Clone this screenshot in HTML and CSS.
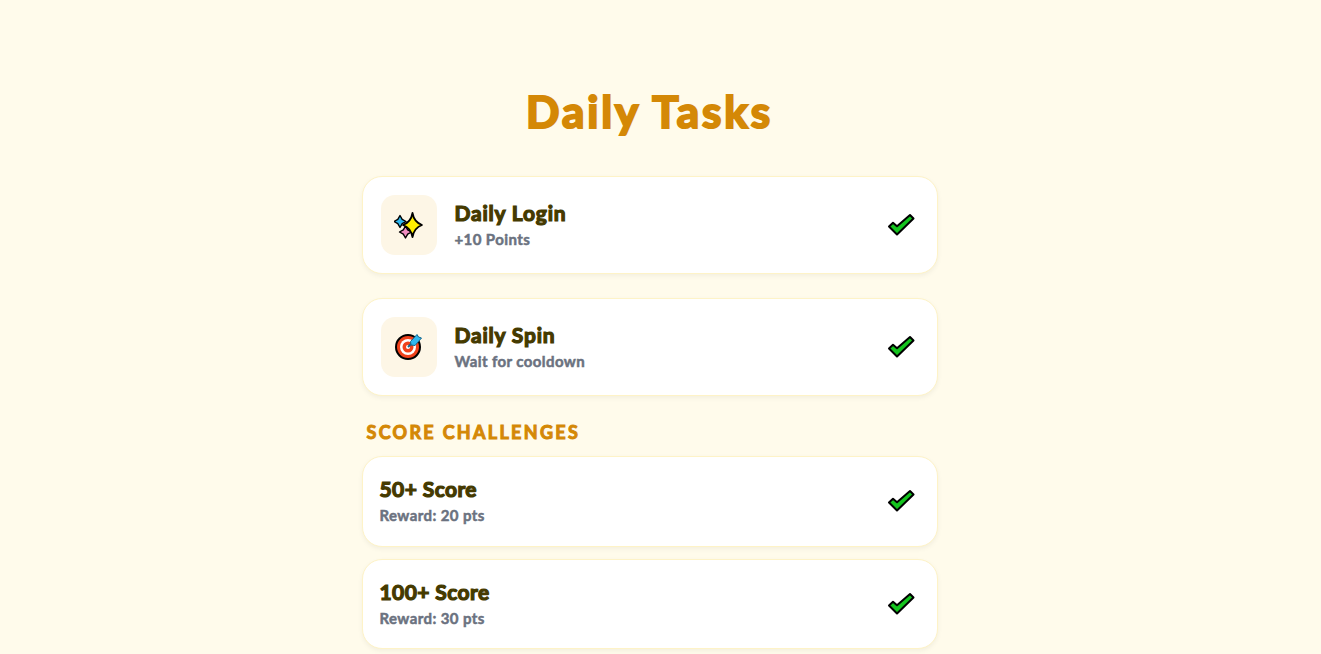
FILE: index.html
```html
<!DOCTYPE html>
<html lang="en">
<head>
    <meta charset="UTF-8">
    <meta name="viewport" content="width=device-width, initial-scale=1.0">
    <title>Daily Tasks</title>
    <link rel="stylesheet" href="styles.css">
</head>
<body>
    <main class="page">
        <h1 class="page-title">Daily Tasks</h1>

        <div class="task-card daily">
            <div class="task-icon">
                <svg width="30" height="30" viewBox="0 0 30 30">
                    <path d="M6 5.500L8.200 9.300 12 11.500 8.200 13.700 6 17.500 3.800 13.700 0 11.500 3.800 9.300z" fill="#2fb8f0" stroke="#000" stroke-width="1.400" stroke-linejoin="round"/>
                    <path d="M11.500 16L13.700 19.800 17.500 22 13.700 24.200 11.500 28 9.300 24.200 5.500 22 9.300 19.800z" fill="#f08cc0" stroke="#000" stroke-width="1.400" stroke-linejoin="round"/>
                    <path d="M18.500 3Q20 12 28 15 20 18 18.500 27 17 18 9 15 17 12 18.500 3z" fill="#ffee00" stroke="#000" stroke-width="1.800" stroke-linejoin="round"/>
                </svg>
            </div>
            <div class="task-text">
                <div class="task-name">Daily Login</div>
                <div class="task-sub">+10 Points</div>
            </div>
            <svg class="check" width="28" height="24" viewBox="0 0 28 24"><path d="M2 13.500l4-3.800 4 3.500L23 2l3.500 3.500L10 21.500z" fill="#14c41e" stroke="#000" stroke-width="2" stroke-linejoin="round"/></svg>
        </div>

        <div class="task-card daily">
            <div class="task-icon">
                <svg width="30" height="30" viewBox="0 0 30 30">
                    <circle cx="14" cy="15" r="12" fill="#f0421c" stroke="#000" stroke-width="2"/>
                    <circle cx="14" cy="15" r="8" fill="#fff"/>
                    <circle cx="14" cy="15" r="5.500" fill="#f0421c"/>
                    <circle cx="14" cy="15" r="2" fill="#fff"/>
                    <path d="M14 15L20 9" stroke="#14658c" stroke-width="2"/>
                    <path d="M16.500 9.500l6.500-7 1.500 2.500 3 1-6.500 7.500-4-.5z" fill="#2fb8f0" stroke="#14658c" stroke-width="1" stroke-linejoin="round"/>
                </svg>
            </div>
            <div class="task-text">
                <div class="task-name">Daily Spin</div>
                <div class="task-sub">Wait for cooldown</div>
            </div>
            <svg class="check" width="28" height="24" viewBox="0 0 28 24"><path d="M2 13.500l4-3.800 4 3.500L23 2l3.500 3.500L10 21.500z" fill="#14c41e" stroke="#000" stroke-width="2" stroke-linejoin="round"/></svg>
        </div>

        <h2 class="section-title">SCORE CHALLENGES</h2>

        <div class="task-card score">
            <div class="task-text">
                <div class="task-name">50+ Score</div>
                <div class="task-sub">Reward: 20 pts</div>
            </div>
            <svg class="check" width="28" height="24" viewBox="0 0 28 24"><path d="M2 13.500l4-3.800 4 3.500L23 2l3.500 3.500L10 21.500z" fill="#14c41e" stroke="#000" stroke-width="2" stroke-linejoin="round"/></svg>
        </div>

        <div class="task-card score">
            <div class="task-text">
                <div class="task-name">100+ Score</div>
                <div class="task-sub">Reward: 30 pts</div>
            </div>
            <svg class="check" width="28" height="24" viewBox="0 0 28 24"><path d="M2 13.500l4-3.800 4 3.500L23 2l3.500 3.500L10 21.500z" fill="#14c41e" stroke="#000" stroke-width="2" stroke-linejoin="round"/></svg>
        </div>
    </main>
</body>
</html>
```

FILE: styles.css
```css
body {
    margin: 0;
    padding-right: 22px;
    background-color: #fffbeb;
    font-family: "Lato", "Open Sans", sans-serif;
    overflow: hidden;
}
.page {
    width: 576px;
    margin: 0 auto;
    padding-top: 84px;
}
.page-title {
    margin: 0 0 37px;
    height: 55px;
    line-height: 55px;
    text-align: center;
    font-size: 44px;
    font-weight: 700;
    letter-spacing: 2.900px;
    color: #d48806;
    -webkit-text-stroke: 2.200px #d48806;
}
.task-card {
    display: flex;
    align-items: center;
    box-sizing: border-box;
    background: white;
    border: 1px solid #fef3c7;
    border-radius: 20px;
    box-shadow: 0 2px 5px rgba(0, 0, 0, 0.05);
}
.daily {
    height: 98px;
    padding: 0 18px;
    margin-bottom: 24px;
    gap: 18px;
}
.score {
    height: 90.500px;
    padding: 0 18px 0 17px;
    margin-bottom: 12px;
}
.task-icon {
    width: 56px;
    height: 60px;
    flex-shrink: 0;
    display: flex;
    align-items: center;
    justify-content: center;
    background: #fdf6e6;
    border-radius: 14px;
}
.task-text {
    flex: 1;
    padding-bottom: 1px;
}
.task-name {
    font-size: 21px;
    line-height: 28px;
    font-weight: 700;
    letter-spacing: 0.800px;
    color: #453a00;
    -webkit-text-stroke: 1.200px #453a00;
}
.score .task-name {
    letter-spacing: 0.400px;
}
.task-sub {
    font-size: 15px;
    line-height: 22px;
    margin-top: 1px;
    font-weight: 700;
    letter-spacing: 0.400px;
    color: #6b7280;
    -webkit-text-stroke: 0.500px #6b7280;
}
.check {
    margin-right: 4px;
}
.section-title {
    margin: 0 0 12px 5px;
    height: 24px;
    line-height: 24px;
    font-size: 18px;
    font-weight: 700;
    letter-spacing: 2.300px;
    color: #d48806;
    -webkit-text-stroke: 1px #d48806;
}
```
